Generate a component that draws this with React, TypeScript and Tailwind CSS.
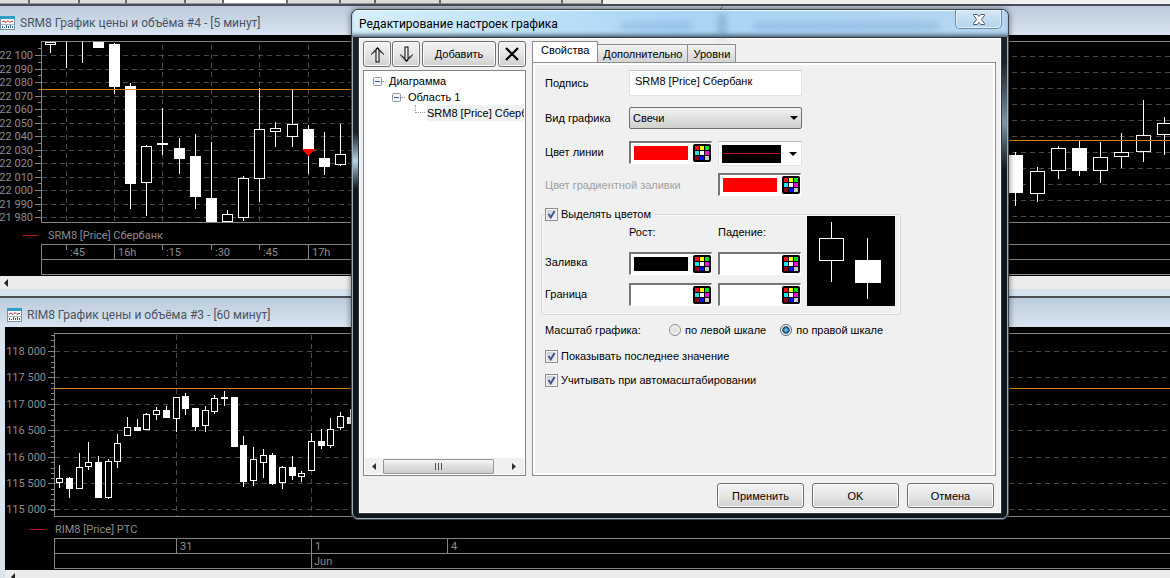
import { useId, useState } from "react";
import type { ReactNode } from "react";
import clsx from "clsx";

// [center x, wick top, wick bottom, body top, body bottom, filled]
type Candle = [number, number, number, number, number, boolean];

const sberCandles: Candle[] = [
  [50, 42, 52, 42, 44, false],
  [66, 42, 67, 42, 42, true],
  [82, 42, 62, 42, 42, true],
  [98, 42, 47, 42, 47, true],
  [114, 43, 93, 44, 86, true],
  [130, 83, 208, 86, 183, true],
  [146, 145, 215, 146, 182, false],
  [162, 108, 154, 143, 144, true],
  [179, 138, 173, 148, 158, true],
  [195, 134, 208, 156, 196, true],
  [211, 142, 221, 198, 221, true],
  [227, 210, 221, 214, 221, false],
  [243, 176, 220, 178, 217, false],
  [259, 88, 201, 129, 178, false],
  [275, 122, 146, 128, 131, false],
  [292, 90, 146, 124, 136, false],
  [308, 125, 173, 129, 149, true],
  [324, 132, 174, 158, 166, true],
  [340, 124, 165, 154, 164, false],
];

const rightCandles: Candle[] = [
  [1015, 152, 205, 155, 192, true],
  [1037, 167, 201, 171, 193, false],
  [1058, 146, 178, 148, 170, false],
  [1079, 141, 175, 148, 170, true],
  [1100, 142, 182, 157, 170, false],
  [1121, 133, 167, 152, 156, false],
  [1143, 100, 161, 135, 151, false],
  [1164, 117, 154, 123, 134, false],
];

const rtsCandles: Candle[] = [
  [59, 465, 487, 478, 482, false],
  [69, 477, 497, 478, 488, true],
  [79, 453, 488, 467, 488, false],
  [88, 442, 469, 462, 466, false],
  [98, 456, 497, 462, 497, true],
  [108, 459, 498, 461, 497, false],
  [117, 434, 467, 443, 461, false],
  [127, 417, 435, 427, 435, false],
  [137, 419, 430, 427, 430, true],
  [146, 413, 429, 414, 429, false],
  [156, 407, 419, 410, 414, false],
  [166, 406, 417, 410, 417, true],
  [176, 397, 431, 397, 418, false],
  [185, 393, 414, 396, 408, true],
  [195, 408, 430, 408, 426, true],
  [205, 406, 431, 410, 425, false],
  [214, 395, 413, 398, 411, false],
  [224, 391, 405, 397, 398, true],
  [234, 397, 446, 397, 446, true],
  [243, 436, 486, 445, 481, true],
  [253, 447, 485, 459, 480, false],
  [263, 449, 477, 455, 462, false],
  [272, 453, 484, 455, 483, true],
  [282, 466, 488, 467, 482, false],
  [292, 456, 479, 467, 475, true],
  [301, 471, 481, 473, 476, false],
  [311, 433, 470, 441, 470, false],
  [321, 429, 448, 441, 445, true],
  [330, 418, 447, 429, 445, false],
  [340, 412, 429, 416, 427, false],
  [350, 409, 423, 417, 423, true],
];

const sberLevels = [
  "22 100", "22 090", "22 080", "22 070", "22 060", "22 050", "22 040",
  "22 030", "22 020", "22 010", "22 000", "21 990", "21 980",
];
const rtsLevels = [
  "118 000", "117 500", "117 000", "116 500", "116 000", "115 500", "115 000",
];

const AXIS = "#858585";
const GRID = "#4a4a4a";
const ORANGE = "#d08528";

function Candles({ items, width }: { items: Candle[]; width: number }) {
  const half = (width - 1) / 2;
  return (
    <g>
      {items.map(([x, wickTop, wickBottom, top, bottom, filled]) => (
        <g key={x}>
          <rect x={x} y={wickTop} width={1} height={wickBottom - wickTop + 1} fill="#fff" />
          {bottom > top && (
            <rect x={x - half} y={top} width={width} height={bottom - top + 1} fill="#fff" />
          )}
          {!filled && (
            <rect
              x={x - half + 1}
              y={top + 1}
              width={width - 2}
              height={Math.max(bottom - top - 1, 0)}
              fill="#000"
            />
          )}
        </g>
      ))}
    </g>
  );
}

function HLine({ y, x = 0, color = AXIS, dash }: { y: number; x?: number; color?: string; dash?: string }) {
  return (
    <line x1={x} x2="400%" y1={y + 0.5} y2={y + 0.5} stroke={color} strokeDasharray={dash} />
  );
}

function VLine({ x, from, to, color = AXIS, dash }: { x: number; from: number; to: number; color?: string; dash?: string }) {
  return (
    <line x1={x + 0.5} x2={x + 0.5} y1={from} y2={to} stroke={color} strokeDasharray={dash} />
  );
}

function SberChart() {
  return (
    <svg className="block h-[241px] w-full bg-black font-[Roboto,sans-serif] text-[11px]" fill="#8c8c8c" shapeRendering="crispEdges">
      <g transform="translate(0 -35)">
        {sberLevels.map((label, i) => {
          const y = Math.round(55 + i * 13.5);
          return (
            <g key={label}>
              <HLine x={42} y={y} color={GRID} dash="5 4" />
              <line x1={35} x2={41} y1={y + 0.5} y2={y + 0.5} stroke={AXIS} />
              <line x1={38} x2={41} y1={y - 6.5} y2={y - 6.5} stroke={AXIS} />
              <text x={33} y={y + 4} textAnchor="end">{label}</text>
            </g>
          );
        })}
        {[66, 114, 162, 211, 259, 308].map((x) => (
          <VLine key={x} x={x} from={45} to={222} color={GRID} dash="5 4" />
        ))}
        <HLine x={41} y={41} />
        <HLine x={41} y={222} />
        <VLine x={41} from={41} to={223} />
        <Candles items={sberCandles} width={11} />
        <HLine x={38} y={89} color={ORANGE} />
        <path d="M302 149h13l-6.500 7z" fill="#f00" />
        <rect x={23} y={235} width={15} height={1} fill="#c01818" />
        <text x={48} y={239}>SRM8 [Price] Сбербанк</text>
        <HLine x={41} y={244} />
        <HLine x={41} y={259} />
        <HLine x={41} y={274} />
        <VLine x={41} from={244} to={275} />
        {[66, 162, 211, 259].map((x) => (
          <VLine key={x} x={x} from={244} to={250} />
        ))}
        <VLine x={114} from={244} to={259} />
        <VLine x={308} from={244} to={259} />
        <text x={70} y={256}>:45</text>
        <text x={118} y={256}>16h</text>
        <text x={166} y={256}>:15</text>
        <text x={215} y={256}>:30</text>
        <text x={263} y={256}>:45</text>
        <text x={312} y={256}>17h</text>
      </g>
    </svg>
  );
}

function RightChart() {
  return (
    <svg className="block h-[241px] w-full bg-black" shapeRendering="crispEdges">
      <g transform="translate(-720 -35)">
        {Array.from({ length: 11 }, (_, i) => (
          <HLine key={i} x={724} y={56 + i * 16} color={GRID} dash="5 4" />
        ))}
        {[41, 222, 244, 259, 274].map((y) => (
          <HLine key={y} y={y} x={724} />
        ))}
        <Candles items={rightCandles} width={15} />
        <HLine x={724} y={140} color={ORANGE} />
      </g>
    </svg>
  );
}

function RtsChart() {
  return (
    <svg className="block h-[243px] w-full bg-black font-[Roboto,sans-serif] text-[11px]" fill="#8c8c8c" shapeRendering="crispEdges">
      <g transform="translate(-5 -327)">
        {rtsLevels.map((label, i) => {
          const y = Math.round(351 + i * 26.4);
          return (
            <g key={label}>
              <HLine x={55} y={y} color={GRID} dash="5 4" />
              <line x1={48} x2={54} y1={y + 0.5} y2={y + 0.5} stroke={AXIS} />
              <text x={46} y={y + 4} textAnchor="end">{label}</text>
            </g>
          );
        })}
        {Array.from({ length: 34 }, (_, i) => {
          const y = Math.round(335 + i * 5.3) + 0.5;
          return <line key={i} x1={51} x2={54} y1={y} y2={y} stroke={AXIS} />;
        })}
        {[176, 311, 447].map((x) => (
          <VLine key={x} x={x} from={335} to={516} color={GRID} dash="5 4" />
        ))}
        <HLine x={54} y={333} />
        <HLine x={54} y={516} />
        <VLine x={54} from={333} to={517} />
        <HLine x={54} y={388} color={ORANGE} />
        <Candles items={rtsCandles} width={7} />
        <rect x={30} y={529} width={15} height={1} fill="#c01818" />
        <text x={55} y={533}>RIM8 [Price] РТС</text>
        <HLine x={54} y={538} />
        <HLine x={54} y={553} />
        <HLine x={54} y={568} />
        <VLine x={54} from={538} to={569} />
        <VLine x={176} from={538} to={553} />
        <VLine x={311} from={538} to={569} />
        <VLine x={447} from={538} to={553} />
        <text x={180} y={550}>31</text>
        <text x={315} y={550}>1</text>
        <text x={451} y={550}>4</text>
        <text x={314} y={565}>Jun</text>
      </g>
    </svg>
  );
}

function ChartIcon() {
  return (
    <svg width="15" height="14" viewBox="0 0 15 14" className="shrink-0">
      <rect x="0.5" y="0.5" width="14" height="13" fill="#fff" stroke="#7b93a8" />
      <path d="M0 1.500h15" stroke="#2f9fc4" strokeWidth="3" />
      <path d="M2 6l2-1 2 1.500 2-2 2 2 2-1.500 1 1" fill="none" stroke="#b02a3a" />
      <path d="M2.500 10v2M4.500 11v1M6.500 9v3M8.500 10v2M10.500 9v3M12.500 10v2" stroke="#2c5f8f" />
      <path d="M1 8.500h13" stroke="#aab8c4" />
    </svg>
  );
}

function WindowTitle({ children, className }: { children?: ReactNode; className?: string }) {
  return (
    <div
      className={clsx(
        "flex h-[29px] items-center gap-[5px] bg-linear-to-b from-[#bccbdb] to-[#d8e4f0] pt-[5px] font-[Roboto,sans-serif] text-[12px] whitespace-nowrap text-[#4b5563]",
        className,
      )}
    >
      {children}
    </div>
  );
}

function WindowScrollbar({ className }: { className?: string }) {
  return (
    <div className={clsx("flex h-[13px] items-center bg-[#ececec]", className)}>
      <svg width="4" height="8" viewBox="0 0 4 8">
        <path d="M4 0v8L0 4z" fill="#222" />
      </svg>
    </div>
  );
}

// Strip of workspace tabs cut off by the top edge
function WorkspaceTabs() {
  const widths = ["w-[30px]", "w-[50px]", "w-[47px]", "w-[59px]", "w-[38px]", "w-[64px]", "w-[53px]", "w-[35px]", "w-[65px]", "w-[122px]", "w-[40px]"];
  return (
    <div className="flex h-[4px] bg-[#f0f0f0]">
      {widths.map((w, i) => (
        <span
          key={i}
          className={clsx(w, "border-r-2 border-b border-r-[#686868] border-b-[#999]", i === 5 ? "bg-white" : "bg-[#dcdcdc]")}
        />
      ))}
    </div>
  );
}

const paletteColors = ["#f01020", "#ffff00", "#00e020", "#20e8e8", "#ffffff", "#f010e0", "#900010", "#0010f0", "#c8c8c8"];

function PaletteIcon() {
  return (
    <svg width="18" height="18" viewBox="0 0 18 18" className="shrink-0">
      <rect width="18" height="18" rx="2" fill="#000" />
      {paletteColors.map((color, i) => (
        <rect key={color} x={2 + (i % 3) * 5} y={2 + Math.floor(i / 3) * 5} width="4" height="4" fill={color} />
      ))}
    </svg>
  );
}

function ColorButton({ label, swatch, className }: { label: string; swatch: string; className?: string }) {
  return (
    <button
      type="button"
      aria-label={label}
      className={clsx(
        "flex h-[23px] w-[83px] items-center justify-between border-t-2 border-r border-b border-l-2 border-t-[#767676] border-r-white border-b-white border-l-[#767676] bg-white pl-[3px]",
        className,
      )}
    >
      <span className={clsx("h-[14px] w-[54px]", swatch)} />
      <PaletteIcon />
    </button>
  );
}

function PushButton({ children, className, label }: { children: ReactNode; className?: string; label?: string }) {
  return (
    <button
      type="button"
      aria-label={label}
      className={clsx(
        "flex items-center justify-center rounded-[3px] border border-[#707070] bg-linear-to-b from-[#f3f3f3] via-[#e6e6e6] to-[#cfcfcf] shadow-[inset_0_0_0_1px_#fafafa]",
        className,
      )}
    >
      {children}
    </button>
  );
}

function CheckOption({ children }: { children: ReactNode }) {
  const id = useId();
  return (
    <div className="flex h-[14px] items-center gap-[3px]">
      <span className="grid size-[13px]">
        <input
          id={id}
          type="checkbox"
          defaultChecked
          className="peer col-start-1 row-start-1 size-[13px] appearance-none border border-[#8e8f8f] bg-linear-to-br from-[#c4cbd4] to-[#f6f6f6] shadow-[inset_0_0_0_1px_#f4f4f4]"
        />
        <svg viewBox="0 0 13 13" className="pointer-events-none invisible col-start-1 row-start-1 peer-checked:visible">
          <path d="M3.500 6l2.300 3.500L9.500 3" fill="none" stroke="#42548f" strokeWidth="1.900" />
        </svg>
      </span>
      <label htmlFor={id}>{children}</label>
    </div>
  );
}

function ScaleOption({ children, defaultChecked }: { children: ReactNode; defaultChecked?: boolean }) {
  const id = useId();
  return (
    <div className="flex items-center gap-1">
      <input
        id={id}
        type="radio"
        name="scale"
        defaultChecked={defaultChecked}
        className="size-3 appearance-none rounded-full border border-[#8e8f8f] bg-radial from-[#dedede] to-[#f8f8f8] checked:border-[#5a6a78] checked:from-[#6fc4ee] checked:from-10% checked:via-[#123f68] checked:via-45% checked:to-[#f4f4f4] checked:to-60%"
      />
      <label htmlFor={id}>{children}</label>
    </div>
  );
}

function DownArrow() {
  return (
    <svg width="8" height="4" viewBox="0 0 8 4" className="shrink-0">
      <path d="M0 0h8L4 4z" fill="#000" />
    </svg>
  );
}

function ArrowIcon({ down }: { down?: boolean }) {
  return (
    <svg width="15" height="17" viewBox="0 0 15 17" className={clsx(down && "rotate-180")}>
      <path
        d="M7.500 1L1 7.500v1.500l4.500-3.500V16.500h4V5.500L14 9V7.500z"
        fill="#000"
      />
      <path d="M6.500 4v11.500h2V4l-1-1z" fill="#f2f2f2" />
      <path d="M1 8l5-4.500M14 8L9 3.500" stroke="#f2f2f2" strokeWidth="0.600" />
    </svg>
  );
}

function TreeToggle() {
  return (
    <svg width="9" height="9" viewBox="0 0 9 9" className="shrink-0">
      <rect x="0.500" y="0.500" width="8" height="8" rx="1" fill="#f4f5f8" stroke="#8d98a8" />
      <path d="M2 4.500h5" stroke="#3c5a9a" />
    </svg>
  );
}

function SeriesTree() {
  return (
    <div className="flex flex-1 flex-col border border-[#82878f] bg-white p-px">
      <ul className="flex-1 overflow-hidden pt-px whitespace-nowrap">
        <li>
          <div className="flex h-4 items-center pl-2">
            <TreeToggle />
            <span className="mr-[3px] w-1 border-t border-dotted border-[#999]" />
            Диаграмма
          </div>
          <ul>
            <li>
              <div className="flex h-4 items-center pl-[27px]">
                <TreeToggle />
                <span className="mr-[3px] w-1 border-t border-dotted border-[#999]" />
                Область 1
              </div>
              <ul>
                <li className="flex h-4 pl-[50px]">
                  <span className="mr-[2px] h-2 w-[10px] shrink-0 border-b border-l border-dotted border-[#999]" />
                  <span className="shrink-0 bg-[#f0f0f0] pr-4 leading-4">SRM8 [Price] Сбербанк</span>
                </li>
              </ul>
            </li>
          </ul>
        </li>
      </ul>
      <div className="flex h-4 items-center bg-[#f0f0f0]">
        <div className="flex w-[18px] justify-center">
          <svg width="4" height="7" viewBox="0 0 4 7">
            <path d="M4 0v7L0 3.500z" fill="#333" />
          </svg>
        </div>
        <div className="flex h-[15px] w-[111px] items-center justify-center gap-[2px] rounded-[1px] border border-[#979797] bg-linear-to-b from-[#f5f5f5] via-[#dfdfdf] to-[#cdcdcd]">
          <span className="h-[7px] w-px bg-[#555]" />
          <span className="h-[7px] w-px bg-[#555]" />
          <span className="h-[7px] w-px bg-[#555]" />
        </div>
        <div className="flex flex-1 justify-end pr-2">
          <svg width="4" height="7" viewBox="0 0 4 7">
            <path d="M0 0v7l4-3.500z" fill="#333" />
          </svg>
        </div>
      </div>
    </div>
  );
}

function CandlePreview() {
  return (
    <svg width="88" height="90" viewBox="0 0 88 90" className="bg-black" shapeRendering="crispEdges">
      <path d="M24.500 6v16M24.500 45v21" stroke="#fff" />
      <rect x="12.500" y="22.500" width="24" height="22" fill="none" stroke="#fff" />
      <path d="M60.500 22v61" stroke="#fff" />
      <rect x="48" y="44" width="26" height="23" fill="#fff" />
    </svg>
  );
}

function PropertiesForm() {
  const [caption, setCaption] = useState("SRM8 [Price] Сбербанк");

  return (
    <form className="flex-1 border-2 border-white bg-[#f0f0f0] px-[6px] pt-[5px]">
      <div className="grid grid-cols-[84px_89px_1fr] items-center pl-1">
        <label htmlFor="caption">Подпись</label>
        <input
          id="caption"
          value={caption}
          onChange={(e) => setCaption(e.target.value)}
          className="col-span-2 h-[26px] w-[173px] border border-[#e2e3ea] border-t-[#c4c6cf] bg-white px-[5px] pb-1 outline-none"
        />
      </div>

      <div className="mt-[11px] grid grid-cols-[84px_89px_1fr] items-center pl-1">
        <label htmlFor="kind">Вид графика</label>
        <div className="col-span-2 grid w-[173px] items-center">
          <select
            id="kind"
            className="col-start-1 row-start-1 h-[22px] appearance-none rounded-[2px] border border-[#707070] bg-linear-to-b from-[#f2f2f2] to-[#cfcfcf] pl-[3px] outline-none"
          >
            <option>Свечи</option>
            <option>Линия</option>
          </select>
          <span className="pointer-events-none col-start-1 row-start-1 justify-self-end pr-1">
            <DownArrow />
          </span>
        </div>
      </div>

      <div className="mt-3 grid grid-cols-[84px_89px_1fr] pl-1">
        <span className="leading-[23px]">Цвет линии</span>
        <ColorButton label="Цвет линии" swatch="bg-[#f00]" />
        <button
          type="button"
          aria-label="Стиль линии"
          aria-haspopup="listbox"
          className="flex h-[25px] w-[84px] items-center justify-between border border-[#e2e3ea] border-t-[#b8bac2] bg-white pr-1 pl-[3px]"
        >
          <span className="flex h-[18px] w-[59px] items-center bg-black px-px">
            <span className="h-px flex-1 bg-[#c01818]" />
          </span>
          <DownArrow />
        </button>
      </div>

      <div className="mt-[7px] grid grid-cols-[173px_1fr] items-center pl-1">
        <span className="text-[#a0a0a0]">Цвет градиентной заливки</span>
        <ColorButton label="Цвет градиентной заливки" swatch="bg-[#f00]" />
      </div>

      <fieldset className="mt-[11px] w-[360px] rounded-[3px] border border-[#d8d8d8] px-[3px] pb-2 shadow-[inset_0_0_0_1px_#f8f8f8]">
        <legend className="bg-[#f0f0f0] pr-1">
          <CheckOption>Выделять цветом</CheckOption>
        </legend>
        <div className="-mt-[5px] grid grid-cols-[84px_89px_89px_88px] grid-rows-[36px_31px_23px]">
          <span className="col-start-2 leading-8">Рост:</span>
          <span className="leading-8">Падение:</span>
          <div className="row-span-3">
            <CandlePreview />
          </div>
          <span className="leading-[21px]">Заливка</span>
          <ColorButton label="Заливка, рост" swatch="bg-black" />
          <ColorButton label="Заливка, падение" swatch="bg-white" />
          <span className="leading-[23px]">Граница</span>
          <ColorButton label="Граница, рост" swatch="bg-white" />
          <ColorButton label="Граница, падение" swatch="bg-white" />
        </div>
      </fieldset>

      <div className="mt-2 flex h-[14px] items-center pl-1" role="radiogroup" aria-label="Масштаб графика">
        <span className="w-[124px]">Масштаб графика:</span>
        <div className="flex gap-[14px]">
          <ScaleOption>по левой шкале</ScaleOption>
          <ScaleOption defaultChecked>по правой шкале</ScaleOption>
        </div>
      </div>
      <div className="mt-3 flex flex-col gap-[10px] pl-1">
        <CheckOption>Показывать последнее значение</CheckOption>
        <CheckOption>Учитывать при автомасштабировании</CheckOption>
      </div>
    </form>
  );
}

const tabs = ["Свойства", "Дополнительно", "Уровни"];

function SettingsDialog() {
  const [activeTab, setActiveTab] = useState(tabs[0]);

  return (
    <div
      role="dialog"
      aria-label="Редактирование настроек графика"
      className="absolute top-[9px] left-[351px] w-[658px] overflow-hidden rounded-[7px] border border-[#3a4750] bg-[#12181b] shadow-[0_0_6px_#0008] outline -outline-offset-2 outline-[#9fb0ba]"
    >
      {/* Glass title bar with the windows behind it showing through */}
      <div className="relative flex h-[27px] items-start justify-between bg-linear-to-r from-[#d6f0fb] via-[#a9d4f5] to-[#b5d6f2] pr-[6px] pl-[7px] shadow-[inset_0_-4px_4px_-2px_#46586a,inset_0_1px_0_#f0faff]">
        <span className="absolute top-3 left-[268px] h-2 w-[72px] rounded bg-[#6d9fd0]/35 blur-[3px]" />
        <span className="absolute top-3 left-[402px] h-2 w-[185px] rounded bg-[#6d9fd0]/40 blur-[3px]" />
        <span className="absolute top-1 left-[366px] h-6 w-2 bg-[#5d84aa]/40 blur-[3px]" />
        <h1 className="font-[Roboto,sans-serif] text-[12px] leading-[28px] text-black">
          Редактирование настроек графика
        </h1>
        <button
          type="button"
          aria-label="Закрыть"
          className="relative flex h-[19px] w-[47px] items-center justify-center rounded-b-[5px] border border-t-0 border-[#6f8ba5] bg-linear-to-b from-[#d5e8f7] to-[#b3d3ee] shadow-[inset_0_0_0_1px_#e4f2fc]"
        >
          <svg width="12" height="11" viewBox="0 0 12 11">
            <path
              d="M0.500 0.500h3.800L6 2.600 7.700 0.500h3.800v1L8.300 5.500l3.200 4v1H7.700L6 8.400l-1.700 2.100H0.500v-1l3.200-4-3.200-4z"
              fill="#fff"
              stroke="#4a5663"
            />
          </svg>
        </button>
      </div>

      <div className="flex">
        <span className="w-[6px] bg-linear-to-b from-[#1a2227] from-20% via-[#b9d8ea] via-26% to-[#10171b] to-32%" />
        <div className="flex flex-1 flex-col border border-[#2e383e] bg-[#f0f0f0] px-1 pt-[3px] pb-[5px] shadow-[inset_0_0_0_1px_#fff]">
          <div className="flex gap-[6px] pr-px">
            <div className="flex w-[163px] shrink-0 flex-col gap-[3px]">
              <div className="flex h-[26px] gap-px">
                <PushButton label="Вверх" className="w-7">
                  <ArrowIcon />
                </PushButton>
                <PushButton label="Вниз" className="w-7">
                  <ArrowIcon down />
                </PushButton>
                <PushButton className="ml-px w-[74px]">Добавить</PushButton>
                <PushButton label="Удалить" className="ml-px w-7">
                  <svg width="14" height="14" viewBox="0 0 14 14">
                    <path d="M1 1l12 12M13 1L1 13" stroke="#000" strokeWidth="2.200" />
                  </svg>
                </PushButton>
              </div>
              <SeriesTree />
            </div>

            <div className="flex h-[435px] flex-1 flex-col">
              <div role="tablist" className="-mb-px flex h-[22px] items-end">
                {tabs.map((tab) => (
                  <button
                    key={tab}
                    type="button"
                    role="tab"
                    aria-selected={tab === activeTab}
                    onClick={() => setActiveTab(tab)}
                    className={clsx(
                      "border border-[#8c8e94]",
                      tab === activeTab
                        ? "h-[22px] border-b-white bg-white px-2 pb-1"
                        : "h-[19px] border-l-0 bg-linear-to-b from-[#f2f2f2] to-[#d4d4d4] px-[5px]",
                    )}
                  >
                    {tab}
                  </button>
                ))}
              </div>
              <div role="tabpanel" className="flex flex-1 border border-[#8c8e94]">
                <PropertiesForm />
              </div>
            </div>
          </div>

          <div className="mt-[7px] flex justify-end gap-2 pr-[3px]">
            <PushButton className="h-[25px] w-[87px]">Применить</PushButton>
            <PushButton className="h-[25px] w-[87px]">OK</PushButton>
            <PushButton className="h-[25px] w-[87px]">Отмена</PushButton>
          </div>
        </div>
        <span className="w-[6px] bg-linear-to-b from-[#1a2227] from-5% via-[#7d95a6] via-18% to-[#10171b] to-28%" />
      </div>
      <div className="h-[5px] bg-[#12181b]" />
    </div>
  );
}

export default function App() {
  return (
    <main className="relative h-screen overflow-hidden bg-[#d7e4f0] font-['Liberation_Sans',Arial,sans-serif] text-[11px] leading-[14px] text-black">
      <WorkspaceTabs />
      <div className="flex border-t-2 border-[#4a4f57]">
        <section className="w-[720px] shrink-0">
          <WindowTitle>
            <ChartIcon />
            <h2>SRM8 График цены и объёма #4 - [5 минут]</h2>
          </WindowTitle>
          <SberChart />
          <WindowScrollbar className="pl-1" />
        </section>
        <section className="min-w-0 flex-1">
          <WindowTitle className="rounded-tl border-l border-[#4a4f57]" />
          <RightChart />
          <WindowScrollbar />
        </section>
      </div>
      <section className="mt-[7px] border-t-2 border-[#4a4f57]">
        <WindowTitle className="pl-[7px]">
          <ChartIcon />
          <h2>RIM8 График цены и объёма #3 - [60 минут]</h2>
        </WindowTitle>
        <div className="pl-[5px]">
          <RtsChart />
          <WindowScrollbar className="pl-[6px]" />
        </div>
      </section>
      <SettingsDialog />
    </main>
  );
}
